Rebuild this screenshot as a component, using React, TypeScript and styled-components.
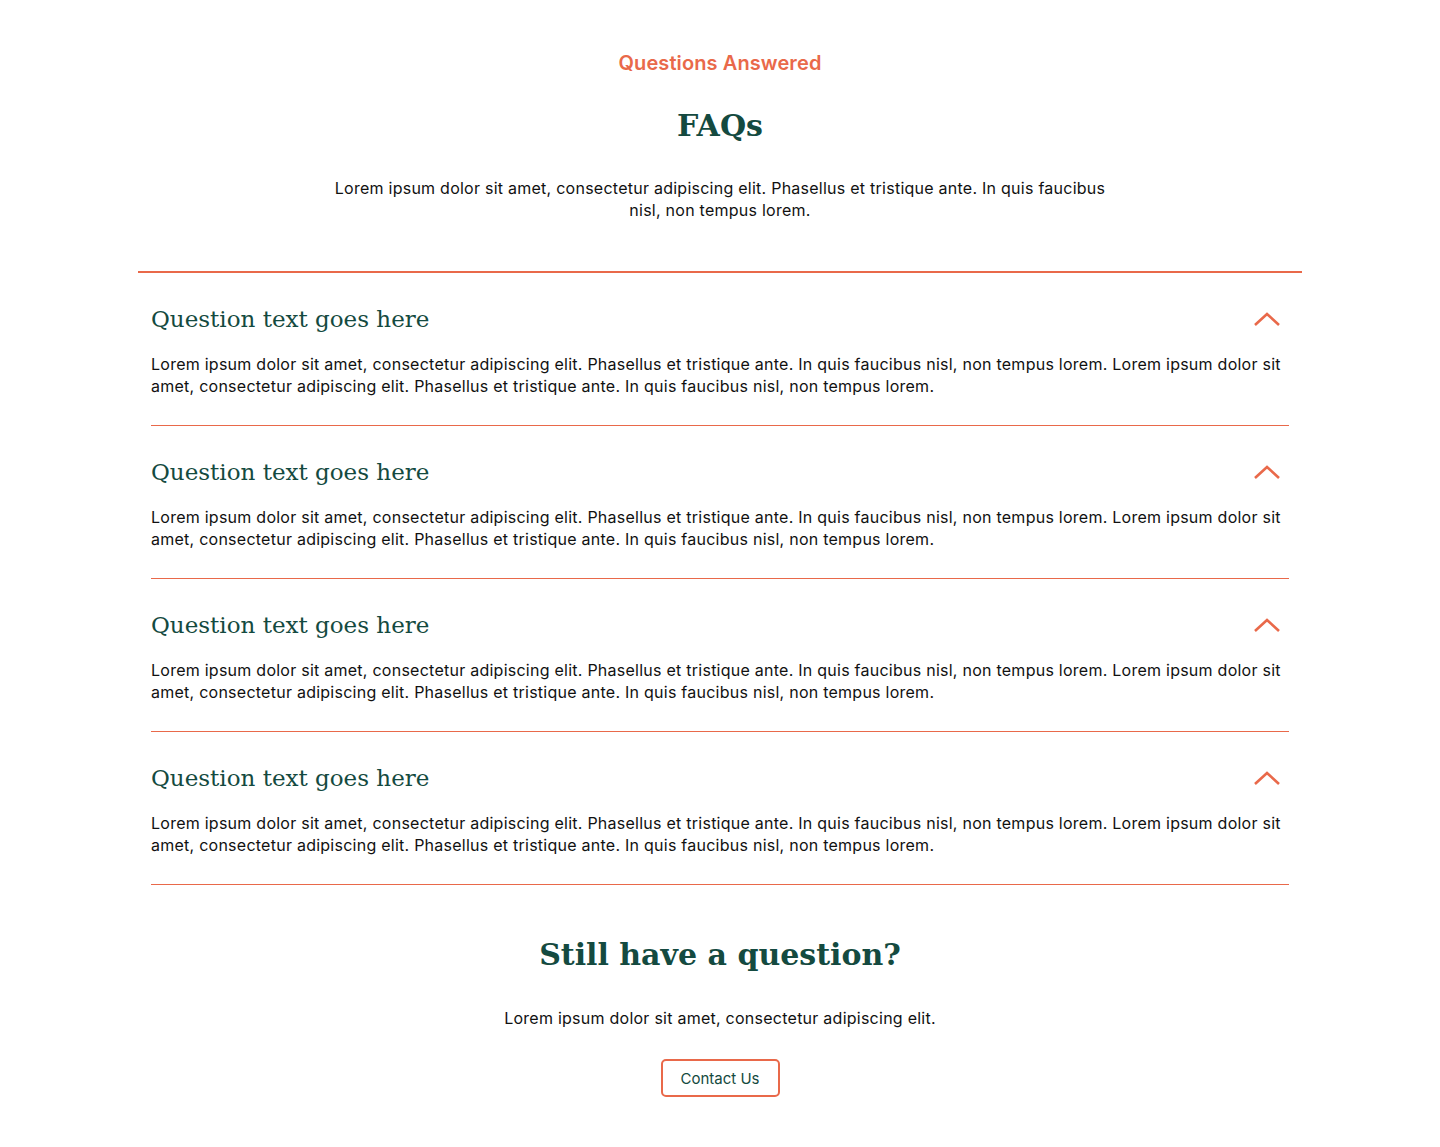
import React from "react";
import styled, { createGlobalStyle } from "styled-components";

const GREEN = "#144a40";
const ORANGE = "#e9694a";

const Global = createGlobalStyle`
  html, body { margin: 0; padding: 0; background: #fff; }
  body { font-family: "Inter", "Noto Sans", sans-serif; color: #111; }
  * { box-sizing: border-box; }
`;

const Page = styled.main`
  width: 1164px;
  margin: 0 auto;
  padding: 50px 0 50px;
  display: flex;
  flex-direction: column;
  align-items: center;
`;

const Eyebrow = styled.div`
  color: ${ORANGE};
  font-size: 20px;
  font-weight: 600;
  line-height: 26px;
  letter-spacing: 0.1px;
`;

const Title = styled.h1`
  margin: 28px 0 0;
  font-family: "DejaVu Serif", "Liberation Serif", serif;
  color: ${GREEN};
  font-size: 30px;
  font-weight: 700;
  line-height: 44px;
`;

const BodyText = styled.p<{ $top: number }>`
  margin: ${(p) => p.$top}px 0 0;
  font-size: 16px;
  line-height: 22px;
  letter-spacing: 0.25px;
`;

const Lead = styled(BodyText)`
  max-width: 780px;
  text-align: center;
`;

const List = styled.section`
  margin-top: 50px;
  width: 100%;
  border-top: 2px solid ${ORANGE};
  padding: 0 13px;
`;

const Item = styled.article`
  padding: 30px 0 28px;
  border-bottom: 1px solid ${ORANGE};
`;

const QuestionRow = styled.div`
  display: flex;
  align-items: center;
  justify-content: space-between;
  padding-right: 8px;
`;

const Question = styled.h3`
  margin: 0;
  font-family: "DejaVu Serif", "Liberation Serif", serif;
  font-weight: 400;
  color: ${GREEN};
  font-size: 23px;
  line-height: 32px;
`;

const Closing = styled.h2`
  margin: 48px 0 0;
  font-family: "DejaVu Serif", "Liberation Serif", serif;
  color: ${GREEN};
  font-size: 30px;
  font-weight: 700;
  line-height: 44px;
`;

const ContactButton = styled.button`
  margin-top: 30px;
  width: 119px;
  height: 38px;
  border: 2px solid ${ORANGE};
  border-radius: 5px;
  background: #fff;
  color: ${GREEN};
  font-family: "Inter", "Noto Sans", sans-serif;
  font-size: 15px;
  cursor: pointer;
`;

const Chevron = () => (
  <svg width="28" height="16" viewBox="0 0 28 16" fill="none">
    <path d="M2 14 L14 3 L26 14" stroke={ORANGE} strokeWidth="2.6" />
  </svg>
);

const answer =
  "Lorem ipsum dolor sit amet, consectetur adipiscing elit. Phasellus et tristique ante. In quis faucibus nisl, non tempus lorem. Lorem ipsum dolor sit amet, consectetur adipiscing elit. Phasellus et tristique ante. In quis faucibus nisl, non tempus lorem.";

export default function App() {
  return (
    <>
      <Global />
      <Page>
        <Eyebrow>Questions Answered</Eyebrow>
        <Title>FAQs</Title>
        <Lead $top={29}>
          Lorem ipsum dolor sit amet, consectetur adipiscing elit. Phasellus et tristique ante. In quis faucibus
          nisl, non tempus lorem.
        </Lead>
        <List>
          {[0, 1, 2, 3].map((i) => (
            <Item key={i}>
              <QuestionRow>
                <Question>Question text goes here</Question>
                <Chevron />
              </QuestionRow>
              <BodyText $top={18}>{answer}</BodyText>
            </Item>
          ))}
        </List>
        <Closing>Still have a question?</Closing>
        <BodyText $top={30}>Lorem ipsum dolor sit amet, consectetur adipiscing elit.</BodyText>
        <ContactButton>Contact Us</ContactButton>
      </Page>
    </>
  );
}
